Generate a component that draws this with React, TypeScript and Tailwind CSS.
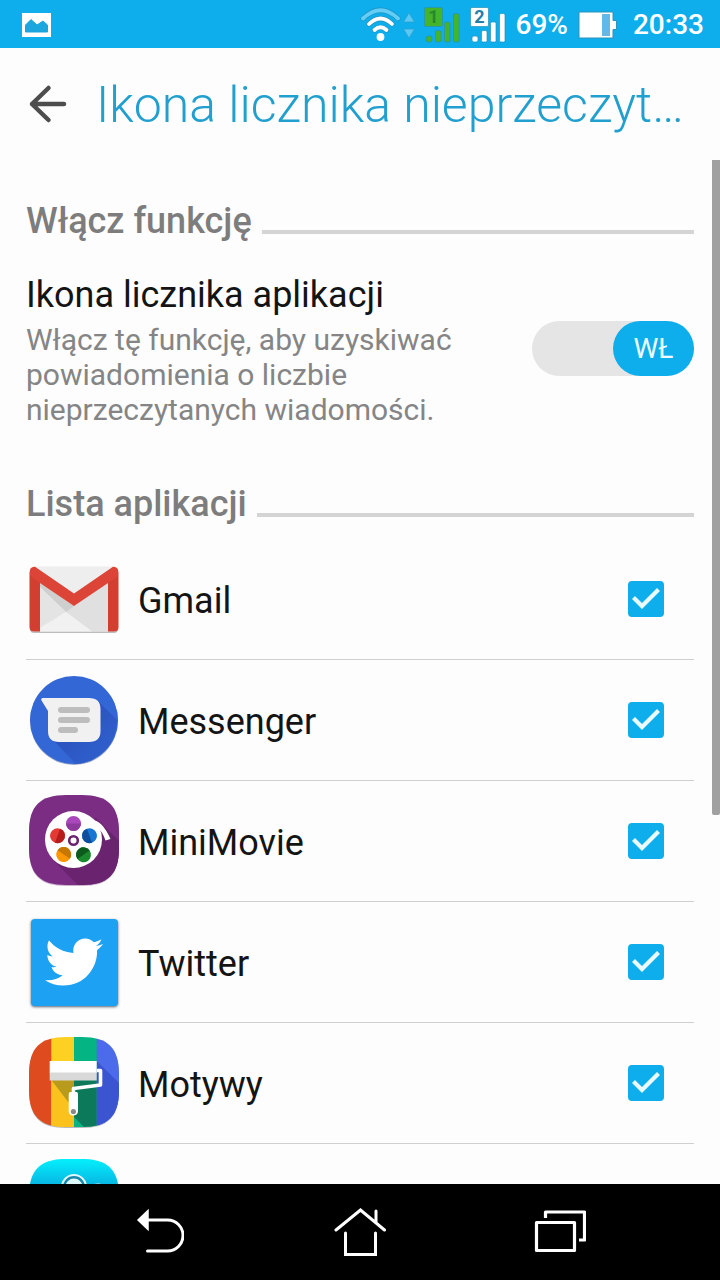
import { ReactNode, useState } from "react";
import { FaTwitter } from "react-icons/fa";

const SQUIRCLE = "M40 2H56C82 2 93 13 93 39V55C93 81 82 92 56 92H40C14 92 3 81 3 55V39C3 13 14 2 40 2Z";

const GmailIcon = () => (
    <svg viewBox="0 0 96 96" className="size-24 shrink-0" aria-hidden="true">
        <path d="M7 17H89Q92 17 92 21V78Q92 82 88 82H8Q4 82 4 78V21Z" fill="#bdbdbd" />
        <path d="M8 15.500H88L92 20V77Q92 80.500 88 80.500H8Q4 80.500 4 77V20Z" fill="#eeeeee" />
        <path d="M14 32L48 55L82 32V80.500H66L40 61L14 36Z" fill="#e0e0e0" />
        <path d="M14 32L48 55L40 61L14 36Z" fill="#cfcfcf" />
        <path d="M14 36L40 61L14 77Z" fill="#e4e4e4" />
        <path d="M14 80.500V77L40 61L66 80.500Z" fill="#f1f1f1" />
        <path d="M3.500 21V76Q3.500 80.500 8 80.500H14V30ZM92.500 21V76Q92.500 80.500 88 80.500H82V30Z" fill="#d23f31" />
        <path d="M9 15.700Q6 15.500 4.500 17.500Q3 20 4 23.500Q5 26 8 28L48 55L88 28Q91 26 92 23.500Q93 20 91.500 17.500Q90 15.500 87 15.700L48 42.500Z" fill="#db4437" />
    </svg>
);

const MessengerIcon = () => (
    <svg viewBox="0 0 96 96" className="size-24 shrink-0" aria-hidden="true">
        <defs>
            <linearGradient id="messenger-shade" x1="0" y1="0" x2="1" y2="1">
                <stop offset="0.300" stopColor="#2a53bd" />
                <stop offset="1" stopColor="#3163d0" />
            </linearGradient>
        </defs>
        <circle cx="48" cy="49" r="44" fill="#9aa6c6" />
        <circle cx="48" cy="48" r="44" fill="#3367d6" />
        <path d="M72 29L91 48A44 44 0 0 1 50 92L26 67Z" fill="url(#messenger-shade)" />
        <path d="M17 26H63Q74.500 26 74.500 37V59Q74.500 70 63 70H33Q22 70 22 59V39L15.500 28.500Q14.500 26 17 26Z" fill="#f1f1f1" />
        <g fill="#bdbdbd">
            <rect x="32" y="35" width="32" height="6" rx="3" />
            <rect x="32" y="45" width="32" height="6" rx="3" />
            <rect x="32" y="55" width="20" height="6" rx="3" />
        </g>
    </svg>
);

const holes = [
    { cx: 47.5, cy: 30.5, light: "#ab47bc", dark: "#8e3a9d", turn: 0 },
    { cx: 31.5, cy: 42.7, light: "#e53935", dark: "#b71c1c", turn: -70 },
    { cx: 63.5, cy: 42.7, light: "#1976d2", dark: "#0d4f9e", turn: 70 },
    { cx: 37.7, cy: 61.5, light: "#ff9800", dark: "#c77700", turn: -145 },
    { cx: 57.5, cy: 61.8, light: "#1b8a2f", dark: "#0c5a1c", turn: 145 },
];

const MiniMovieIcon = () => (
    <svg viewBox="0 0 96 96" className="size-24 shrink-0" aria-hidden="true">
        <path d={SQUIRCLE} transform="translate(0 1)" fill="#c9b4cc" />
        <path d={SQUIRCLE} fill="#7b2d83" />
        <path d="M70 25L93 48V55C93 81 82 92 56 92H52L27 67Z" fill="#69236f" />
        <circle cx="47.500" cy="46.500" r="28.500" fill="#fff" />
        <path d="M66 27Q76 27 84.500 46L79.500 47.500Q77 40 73 36Z" fill="#fff" />
        {holes.map(hole => (
            <g key={hole.light} transform={`rotate(${hole.turn} ${hole.cx} ${hole.cy})`}>
                <circle cx={hole.cx} cy={hole.cy} r="7.500" fill={hole.light} />
                <path d={`M${hole.cx - 7.5} ${hole.cy}a7.500 7.500 0 0 0 15 0Z`} fill={hole.dark} />
            </g>
        ))}
        <circle cx="47.500" cy="47.500" r="4.300" fill="#fff" stroke="#6a2472" strokeWidth="2.600" />
    </svg>
);

const TwitterIcon = () => (
    <span className="flex size-24 shrink-0 items-center justify-center">
        <span className="flex size-[87px] items-center justify-center rounded bg-[#1da1f2] shadow-sm shadow-gray-500">
            <FaTwitter className="size-[58px] text-white" aria-hidden="true" />
        </span>
    </span>
);

const ThemesIcon = () => (
    <svg viewBox="0 0 96 96" className="size-24 shrink-0" aria-hidden="true">
        <defs>
            <clipPath id="themes-clip">
                <path d={SQUIRCLE} />
            </clipPath>
        </defs>
        <path d={SQUIRCLE} transform="translate(0 1)" fill="#b9b9b9" />
        <g clipPath="url(#themes-clip)">
            <rect width="26" height="96" fill="#dd4b1f" />
            <rect x="25.300" width="23" height="96" fill="#fdd023" />
            <rect x="48" width="23" height="96" fill="#04b583" />
            <rect x="70.700" width="26" height="96" fill="#4b6bea" />
            <path d="M25.300 45L43 64V78L48 81V96H25.300Z" fill="#fbc11d" />
            <path d="M25.300 45H48V68H43Z" fill="#b89a1c" />
            <path d="M48 45H70.700V96H62L48 82Z" fill="#0c7a5a" />
            <path d="M70.700 26L96 51V96H70.700Z" fill="#3a55cf" />
        </g>
        <rect x="23.700" y="26" width="47" height="12" fill="#fff" />
        <rect x="23.700" y="37.500" width="47" height="8" fill="#d9d9d9" />
        <path d="M70.700 35.500H74.500V50L47.500 53.500V60" fill="none" stroke="#fff" strokeWidth="3.600" strokeLinejoin="round" />
        <path d="M44.500 57H50.500Q52 57 52 60V76.500a4.700 4.700 0 0 1-9.300 0V60Q42.700 57 44.500 57Z" fill="#fff" />
        <circle cx="47.400" cy="76.500" r="2.600" fill="#8a8a8a" />
    </svg>
);

const CameraIcon = () => (
    <svg viewBox="0 0 96 96" className="size-24 shrink-0" aria-hidden="true">
        <defs>
            <linearGradient id="camera-fill" x1="0" y1="0" x2="0" y2="1">
                <stop offset="0" stopColor="#04f0fc" />
                <stop offset="0.350" stopColor="#08a9dd" />
                <stop offset="1" stopColor="#0788c8" />
            </linearGradient>
        </defs>
        <path d={SQUIRCLE} fill="url(#camera-fill)" />
        <circle cx="48" cy="30" r="12" fill="#1488ad" stroke="#dff8fd" strokeWidth="2" />
        <circle cx="48" cy="30" r="8.500" fill="#dff8fd" />
        <ellipse cx="72" cy="29" rx="5" ry="2.500" fill="#dff8fd" />
    </svg>
);

const Signal = ({ sim, color, digit }: { sim: string; color: string; digit: string }) => (
    <svg viewBox="0 0 36 36" className="size-9" aria-hidden="true">
        <g fill={color} stroke="#2a8fb5" strokeWidth="0.700">
            <rect x="0.500" y="0.500" width="18" height="19" rx="1.500" />
            <rect x="2" y="29" width="6" height="6" rx="2" />
            <rect x="11.500" y="23.500" width="5.500" height="11.500" rx="1.500" />
            <rect x="20.500" y="15" width="5.500" height="20" rx="1.500" />
            <rect x="29.500" y="6.500" width="5.500" height="28.500" rx="1.500" />
        </g>
        <text x="9.500" y="16" textAnchor="middle" fill={digit} className="font-['Roboto',sans-serif] text-[18px] font-bold">
            {sim}
        </text>
    </svg>
);

const StatusBar = () => (
    <div className="flex h-12 shrink-0 items-center bg-[#0daeeb] pt-0.5 pr-4 pl-[22px] text-[28px] font-medium text-white">
        <svg viewBox="0 0 29 24" className="mr-auto h-6 w-[29px]" aria-hidden="true">
            <rect width="29" height="24" fill="#fff" />
            <path d="M3.500 19V12L9 6.500L15 12L21 8L25.500 12V19Z" fill="#1ba6dd" stroke="#1ba6dd" strokeLinejoin="round" />
        </svg>
        <svg viewBox="0 0 56 36" className="mr-2 h-9 w-14" aria-hidden="true">
            <g fill="none" strokeLinecap="round">
                <path d="M3 11.500Q20.500 -5 38 11.500M9 17Q20.500 6 32 17M14.500 23Q20.500 17.500 26.500 23" stroke="#2390bb" strokeWidth="5" />
                <path d="M3 11.500Q20.500 -5 38 11.500" stroke="#62cdf7" strokeWidth="3.800" />
                <path d="M9 17Q20.500 6 32 17M14.500 23Q20.500 17.500 26.500 23" stroke="#fff" strokeWidth="3.800" />
            </g>
            <circle cx="20.500" cy="30" r="3.900" fill="#fff" />
            <path d="M49 6L54.500 15H43.500ZM49 31L54.500 22H43.500Z" fill="#5bc8f3" stroke="#2c9fca" strokeWidth="0.700" />
        </svg>
        <span className="mr-2.5 flex gap-2.5">
            <Signal sim="1" color="#44b52a" digit="#26882f" />
            <Signal sim="2" color="#ffffff" digit="#2280a8" />
        </span>
        <span className="mr-2.5">69%</span>
        <svg viewBox="0 0 39 28" className="mr-4 h-7 w-[39px]" aria-hidden="true">
            <path d="M1 1H35V9.500H38.500V18.500H35V27H1Z" fill="#fff" stroke="#2c93b9" strokeWidth="1" />
            <rect x="24" y="3" width="8" height="22" fill="#62b8e6" />
        </svg>
        <span>20:33</span>
    </div>
);

const SectionTitle = ({ children }: { children: ReactNode }) => (
    <div className="flex items-end gap-2.5">
        <h2 className="text-[36px] leading-[42px] font-medium text-[#7d7d7d]">{children}</h2>
        <span className="mb-2 h-1 flex-1 bg-[#d4d4d4]"></span>
    </div>
);

const Checkbox = ({ id }: { id: string }) => (
    <span className="relative mr-[30px] size-9 shrink-0">
        <input
            id={id}
            type="checkbox"
            defaultChecked
            className="peer block size-9 appearance-none rounded border-2 border-gray-400 checked:border-[#0daeeb] checked:bg-[#0daeeb]"
        />
        <svg viewBox="0 0 36 36" className="pointer-events-none absolute inset-0 hidden size-9 peer-checked:block" aria-hidden="true">
            <path d="M5.500 16.500L14 25L30.500 8.500" fill="none" stroke="#e9fbff" strokeWidth="4.200" />
        </svg>
    </span>
);

const apps = [
    { id: "gmail", name: "Gmail", Icon: GmailIcon },
    { id: "messenger", name: "Messenger", Icon: MessengerIcon },
    { id: "minimovie", name: "MiniMovie", Icon: MiniMovieIcon },
    { id: "twitter", name: "Twitter", Icon: TwitterIcon },
    { id: "themes", name: "Motywy", Icon: ThemesIcon },
];

const App = () => {
    const [enabled, setEnabled] = useState(true);

    return (
        <div className="flex h-screen flex-col overflow-hidden bg-[#fdfdfd] font-['Roboto',sans-serif]">
            <StatusBar />

            <header className="flex h-28 shrink-0 items-center gap-7 px-7">
                <button type="button" aria-label="Wstecz" className="shrink-0">
                    <svg viewBox="0 0 40 40" className="size-10" fill="none" stroke="#4d4d4d" strokeWidth="4.500" strokeLinecap="round" strokeLinejoin="round">
                        <path d="M36 20H4M20.500 4L4 20L20.500 36" />
                    </svg>
                </button>
                <h1 className="pt-0.5 text-[50px] leading-[58px] font-light whitespace-nowrap text-[#219fcf]">Ikona licznika nieprzeczyt…</h1>
            </header>

            <main className="relative min-h-0 flex-1 overflow-hidden px-[26px] pt-10">
                <SectionTitle>Włącz funkcję</SectionTitle>

                <div className="mt-8 flex items-center justify-between gap-4">
                    <div className="max-w-[440px]">
                        <h3 id="counter-label" className="text-[36px] leading-[42px] text-[#141414]">Ikona licznika aplikacji</h3>
                        <p className="mt-1.5 text-[30px] leading-[35px] text-[#858585]">
                            Włącz tę funkcję, aby uzyskiwać powiadomienia o liczbie nieprzeczytanych wiadomości.
                        </p>
                    </div>
                    <button
                        type="button"
                        role="switch"
                        aria-checked={enabled}
                        aria-labelledby="counter-label"
                        onClick={() => setEnabled(!enabled)}
                        className={`mb-1 flex h-[55px] w-[162px] shrink-0 rounded-full bg-[#e5e5e5] ${enabled ? "justify-end" : "justify-start"}`}
                    >
                        <span className={`flex h-full w-1/2 items-center justify-center rounded-full text-[28px] text-[#effcff] ${enabled ? "bg-[#0daeeb]" : "bg-gray-400"}`}>
                            {enabled ? "WŁ" : "WYŁ"}
                        </span>
                    </button>
                </div>

                <div className="mt-14">
                    <SectionTitle>Lista aplikacji</SectionTitle>
                </div>

                <ul className="mt-3.5">
                    {apps.map(({ id, name, Icon }) => (
                        <li key={id} className="flex h-[121px] items-center border-b border-[#cfcfcf]">
                            <Icon />
                            <label htmlFor={id} className="ml-4 flex-1 pt-1 text-[36px] leading-[42px] text-[#141414]">{name}</label>
                            <Checkbox id={id} />
                        </li>
                    ))}
                    <li className="flex h-[121px] items-center">
                        <CameraIcon />
                    </li>
                </ul>

                <div className="absolute top-0 right-0 h-[64%] w-2 rounded-b-xs bg-[#a0a0a0]"></div>
            </main>

            <nav className="flex h-24 shrink-0 items-center bg-black px-[60px] pb-0.5 text-white">
                <button type="button" aria-label="Cofnij" className="flex flex-1 justify-center">
                    <svg viewBox="0 0 48 48" className="size-12" fill="none" stroke="currentColor" strokeWidth="3" strokeLinecap="round">
                        <path d="M12 13H31.500A15.500 15.500 0 0 1 31.500 44H11.500" />
                        <path d="M2 13L12 3.500V22.500Z" fill="currentColor" stroke="currentColor" strokeWidth="1.500" />
                    </svg>
                </button>
                <button type="button" aria-label="Ekran główny" className="flex flex-1 justify-center">
                    <svg viewBox="0 0 52 52" className="size-[52px]" fill="none" stroke="currentColor" strokeWidth="3" strokeLinecap="round">
                        <path d="M2 25L26.500 5L50.500 25M42 6V18M11.500 28V49.500H41.500V28" />
                    </svg>
                </button>
                <button type="button" aria-label="Ostatnie aplikacje" className="flex flex-1 justify-center">
                    <svg viewBox="0 0 52 48" className="h-12 w-[52px]" fill="none" stroke="currentColor" strokeWidth="3.200">
                        <path d="M2.500 15.500H40.500V43.500H2.500ZM11.500 11V5H50.500V33H45" strokeLinejoin="round" />
                    </svg>
                </button>
            </nav>
        </div>
    );
};

export default App;
